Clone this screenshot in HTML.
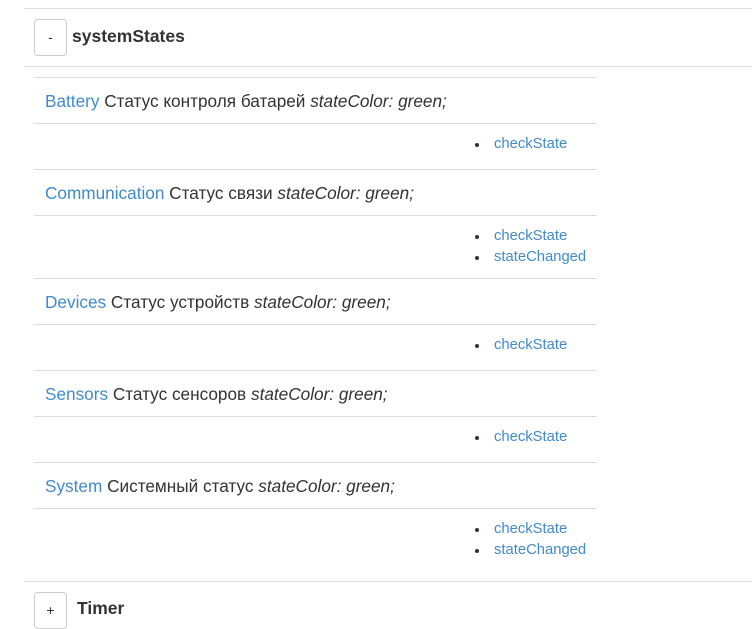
<!DOCTYPE html>
<html><head><meta charset="utf-8"><style>
body{margin:0;width:752px;height:610px;overflow:hidden;background:#fff;font-family:"Liberation Sans",sans-serif;color:#333;position:relative}
.h{position:absolute;height:1px;background:#ddd}
.btn{position:absolute;left:34px;border:1px solid #ccc;border-radius:4px;background:#fff;text-align:center;line-height:35px;font-size:14px;color:#333;box-sizing:border-box;width:33px;height:37px}
.t{position:absolute;font-weight:bold;font-size:17.5px}
.r{position:absolute;left:45px;font-size:17.2px;white-space:nowrap;line-height:20px}
.r a{color:#428bca}
.li{position:absolute;left:494px;font-size:14.8px;color:#428bca;line-height:20px}
.li:before{content:"";position:absolute;left:-19px;top:9px;width:4px;height:4px;border-radius:50%;background:#333}
</style></head><body>
<div class="h" style="top:8px;left:24px;width:728px"></div>
<div class="btn" style="top:19px">-</div>
<div class="t" style="left:72px;top:26px">systemStates</div>
<div class="h" style="top:66px;left:24px;width:728px"></div>
<div class="h" style="top:77px;left:34px;width:563px"></div>
<div class="h" style="top:123px;left:34px;width:563px"></div>
<div class="h" style="top:169px;left:34px;width:563px"></div>
<div class="h" style="top:215px;left:34px;width:563px"></div>
<div class="h" style="top:278px;left:34px;width:563px"></div>
<div class="h" style="top:324px;left:34px;width:563px"></div>
<div class="h" style="top:370px;left:34px;width:563px"></div>
<div class="h" style="top:416px;left:34px;width:563px"></div>
<div class="h" style="top:462px;left:34px;width:563px"></div>
<div class="h" style="top:508px;left:34px;width:563px"></div>
<div class="h" style="top:581px;left:24px;width:728px"></div>

<div class="r" style="top:91px"><a>Battery</a> Статус контроля батарей <i>stateColor: green;</i></div>
<div class="li" style="top:134px">checkState</div>
<div class="r" style="top:183px"><a>Communication</a> Статус связи <i>stateColor: green;</i></div>
<div class="li" style="top:226px">checkState</div>
<div class="li" style="top:247px">stateChanged</div>
<div class="r" style="top:292px"><a>Devices</a> Статус устройств <i>stateColor: green;</i></div>
<div class="li" style="top:335px">checkState</div>
<div class="r" style="top:384px"><a>Sensors</a> Статус сенсоров <i>stateColor: green;</i></div>
<div class="li" style="top:427px">checkState</div>
<div class="r" style="top:476px"><a>System</a> Системный статус <i>stateColor: green;</i></div>
<div class="li" style="top:519px">checkState</div>
<div class="li" style="top:540px">stateChanged</div>

<div class="btn" style="top:592px">+</div>
<div class="t" style="left:77px;top:598px">Timer</div>
</body></html>
